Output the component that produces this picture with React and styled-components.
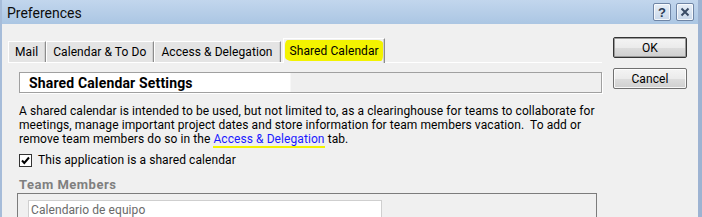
import React from 'react';
import styled, { createGlobalStyle } from 'styled-components';

const Global = createGlobalStyle`
  *, *::before, *::after { box-sizing: border-box; }
  html, body { margin: 0; padding: 0; background: #f0f0f0; }
  body { font-family: Roboto, "Liberation Sans", Arial, sans-serif; color: #000; letter-spacing: 0.08px; }
`;

const Window = styled.div`
  width: 702px;
  height: 217px;
  overflow: hidden;
  background: #f0f0f0;
  display: flex;
  flex-direction: column;
  border-left: 2px solid #a6bcd9;
  border-right: 4px solid #9db3d2;
`;

const TitleBar = styled.div`
  height: 24px;
  flex: none;
  display: flex;
  align-items: center;
  padding: 0 4px 0 5px;
  background: linear-gradient(#c2d6ed, #abc6e3);
`;

const Title = styled.div`
  font-size: 14px;
  color: #0c0c0c;
  padding-top: 1px;
  letter-spacing: 0;
`;

const TitleButtons = styled.div`
  margin-left: auto;
  display: flex;
  gap: 5px;
`;

const TitleButton = styled.div`
  width: 18px;
  height: 18px;
  border: 1px solid #6f85a5;
  border-radius: 2px;
  background: linear-gradient(#e6eef7, #c9d8ea);
  box-shadow: inset 0 0 0 1px rgba(255, 255, 255, 0.75);
  display: flex;
  align-items: center;
  justify-content: center;
  font-size: 13px;
  font-weight: bold;
  color: #2b3c55;
  font-family: "Liberation Sans", Arial, sans-serif;
`;

const Body = styled.div`
  flex: 1;
  display: flex;
`;

const Main = styled.div`
  width: 603px;
  padding-left: 6px;
  display: flex;
  flex-direction: column;
`;

const TabStrip = styled.div`
  display: flex;
  align-items: flex-end;
  height: 24px;
  margin-top: 14px;
`;

const Tab = styled.div`
  height: ${p => (p.$active ? 25 : 21)}px;
  margin-bottom: ${p => (p.$active ? -1 : 0)}px;
  margin-left: ${p => (p.$active ? 2 : 0)}px;
  position: relative;
  z-index: ${p => (p.$active ? 1 : 0)};
  padding: ${p => (p.$active ? '1px 1px 2px 1px' : '0 7px 0 6px')};
  display: flex;
  align-items: center;
  font-size: 12px;
  background: ${p => (p.$active ? '#f0f0f0' : '#e4e4e4')};
  border-top: 1px solid #fff;
  border-left: 1px solid #fff;
  border-right: 1px solid #8c8c8c;
  box-shadow: inset -1px 0 0 #d0d0d0;
`;

const Marker = styled.span`
  height: 100%;
  display: flex;
  align-items: center;
  padding: 0 4px 0 5px;
  background: #f3f300;
  border-radius: 3px 6px 2px 7px / 5px 3px 6px 4px;
`;

const Panel = styled.div`
  width: 594px;
  border-top: 1px solid #fff;
  padding: 9px 0 0 11px;
  display: flex;
  flex-direction: column;
`;

const SectionHeader = styled.div`
  height: 21px;
  border: 1px solid #a0a0a0;
  box-shadow: 1px 1px 0 #fff;
  background: linear-gradient(to right, #fff 0, #fff 270px, #efefef 271px);
  display: flex;
  align-items: center;
  padding-left: 9px;
  font-size: 14px;
  font-weight: bold;
  letter-spacing: 0.15px;
`;

const Paragraph = styled.p`
  margin: 11px 0 0;
  font-size: 12px;
  line-height: 14px;
  white-space: nowrap;
`;

const Link = styled.a`
  color: #1a1aff;
  text-decoration: none;
  border-bottom: 2px solid #f3f300;
`;

const CheckRow = styled.label`
  margin-top: 8px;
  display: flex;
  align-items: center;
  gap: 6px;
  font-size: 12px;
  line-height: 13px;
  height: 13px;
`;

const CheckBox = styled.span`
  width: 13px;
  height: 13px;
  flex: none;
  background: #fff;
  border: 1px solid #333;
  display: flex;
  align-items: center;
  justify-content: center;
`;

const GroupLabel = styled.div`
  margin-top: 11px;
  font-size: 13px;
  line-height: 14px;
  font-weight: bold;
  color: #7f7f7f;
  letter-spacing: 0.5px;
`;

const GroupBox = styled.div`
  margin: 1px 5px 0 -2px;
  border: 1px solid #7c7c7c;
  border-bottom: none;
  padding: 6px 0 0 10px;
  height: 40px;
`;

const TextField = styled.div`
  width: 354px;
  height: 22px;
  background: #fff;
  border: 1px solid #cfcfcf;
  padding: 2px 0 0 2px;
  font-size: 12px;
  line-height: 14px;
  color: #6a6a6a;
`;

const ButtonColumn = styled.div`
  padding: 13px 0 0 8px;
  display: flex;
  flex-direction: column;
  gap: 10px;
`;

const Button = styled.div`
  width: 74px;
  height: 21px;
  display: flex;
  align-items: center;
  justify-content: center;
  font-size: 12px;
  background: linear-gradient(#f4f4f4 0%, #ebebeb 50%, #dddddd 51%, #cfcfcf 100%);
  border: 1px solid ${p => (p.$default ? '#333' : '#707070')};
  box-shadow: inset 0 0 0 1px ${p => (p.$default ? '#9a9a9a' : 'rgba(255,255,255,0.8)')};
  border-radius: 2px;
`;

export default function App() {
  return (
    <>
      <Global />
      <Window>
        <TitleBar>
          <Title>Preferences</Title>
          <TitleButtons>
            <TitleButton>?</TitleButton>
            <TitleButton>
              <svg width="10" height="10" viewBox="0 0 10 10">
                <path d="M1.5 1.5 L8.5 8.5 M8.5 1.5 L1.5 8.5" stroke="#3a4c66" strokeWidth="2" />
              </svg>
            </TitleButton>
          </TitleButtons>
        </TitleBar>
        <Body>
          <Main>
            <TabStrip>
              <Tab>Mail</Tab>
              <Tab>Calendar &amp; To Do</Tab>
              <Tab>Access &amp; Delegation</Tab>
              <Tab $active>
                <Marker>Shared Calendar</Marker>
              </Tab>
            </TabStrip>
            <Panel>
              <SectionHeader>Shared Calendar Settings</SectionHeader>
              <Paragraph>
                A shared calendar is intended to be used, but not limited to, as a clearinghouse for teams to collaborate for
                <br />
                meetings, manage important project dates and store information for team members vacation.&nbsp; To add or
                <br />
                remove team members do so in the <Link>Access &amp; Delegation</Link> tab.
              </Paragraph>
              <CheckRow>
                <CheckBox>
                  <svg width="9" height="9" viewBox="0 0 9 9">
                    <path d="M1 4.5 L3.3 7 L8 1.5" stroke="#000" strokeWidth="2" fill="none" />
                  </svg>
                </CheckBox>
                This application is a shared calendar
              </CheckRow>
              <GroupLabel>Team Members</GroupLabel>
              <GroupBox>
                <TextField>Calendario de equipo</TextField>
              </GroupBox>
            </Panel>
          </Main>
          <ButtonColumn>
            <Button $default>OK</Button>
            <Button>Cancel</Button>
          </ButtonColumn>
        </Body>
      </Window>
    </>
  );
}
